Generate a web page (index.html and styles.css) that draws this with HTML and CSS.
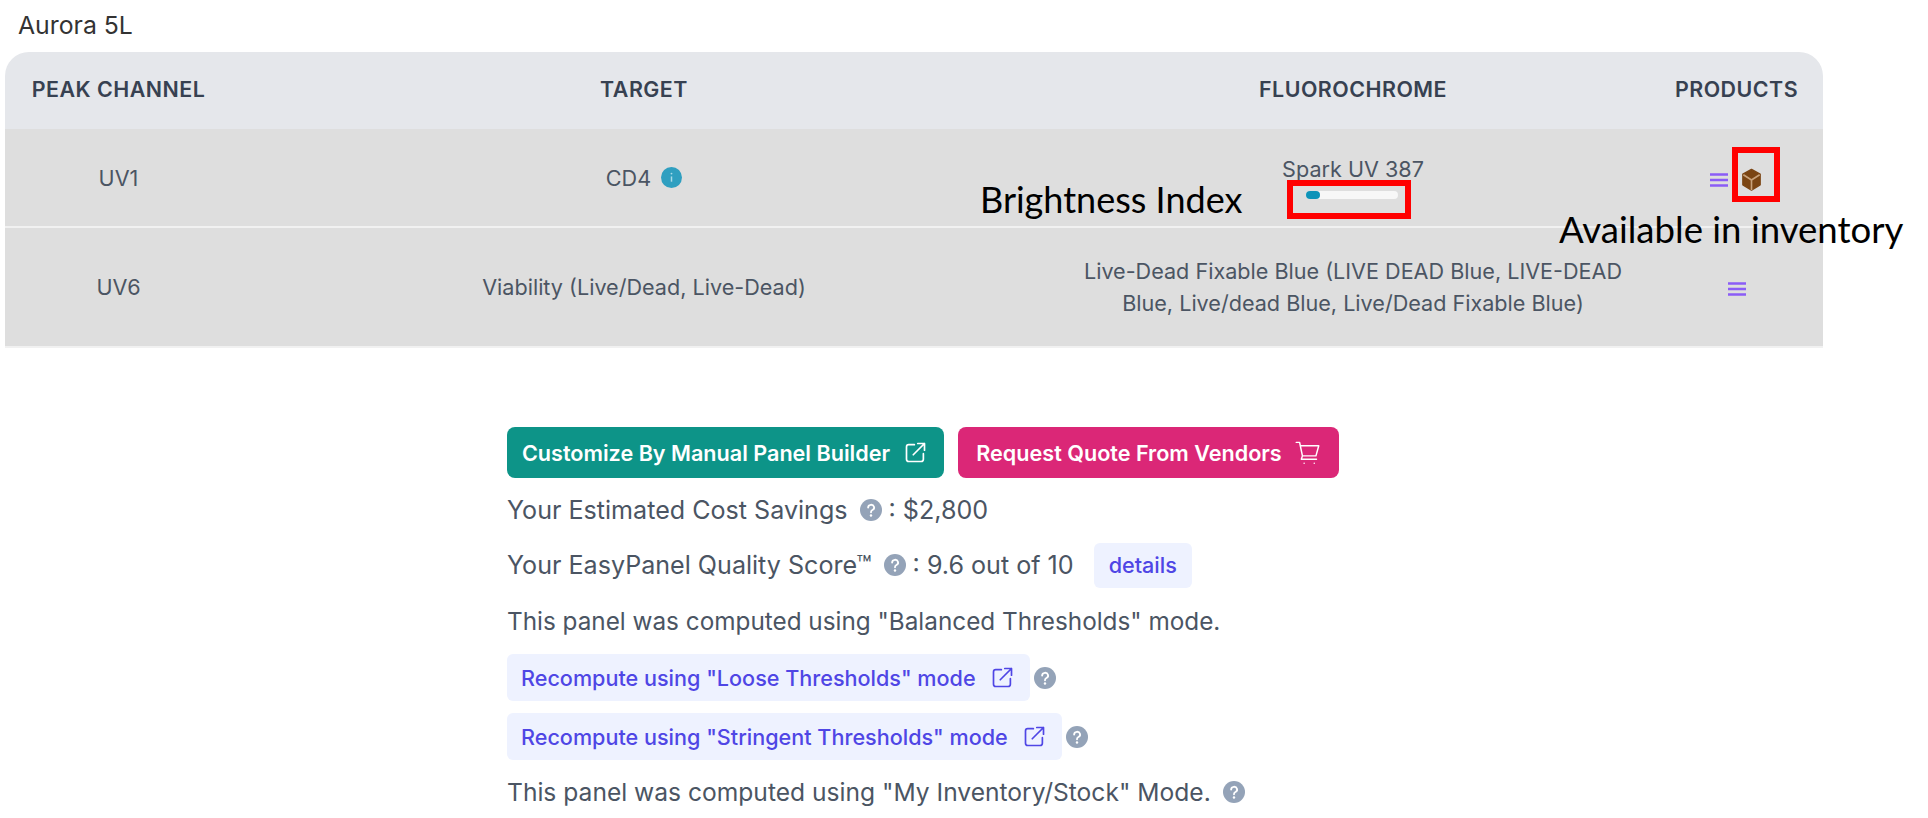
FILE: index.html
```html
<!DOCTYPE html>
<html lang="en">
<head>
    <meta charset="UTF-8">
    <meta name="viewport" content="width=device-width, initial-scale=1.0">
    <title>Aurora 5L</title>
    <link rel="stylesheet" href="styles.css">
</head>
<body>
    <svg class="icon-defs" width="0" height="0">
        <symbol id="i-bars" viewBox="0 0 18 14">
            <path d="M0 1.5h18M0 7h18M0 12.5h18" fill="none" stroke="currentColor" stroke-width="2.4"/>
        </symbol>
        <symbol id="i-external" viewBox="0 0 24 24">
            <path d="M11 5H6a2 2 0 0 0-2 2v11a2 2 0 0 0 2 2h11a2 2 0 0 0 2-2v-5M10 14 20 4M14 4h6v6" fill="none" stroke="currentColor" stroke-width="1.5" stroke-linecap="round" stroke-linejoin="round"/>
        </symbol>
        <symbol id="i-help" viewBox="0 0 20 20">
            <circle cx="10" cy="10" r="10" fill="currentColor"/>
            <path d="M7.4 7.7a2.7 2.5 0 1 1 3.9 2.3c-.9.5-1.300 1-1.300 2" fill="none" stroke="#fff" stroke-width="1.7" stroke-linecap="round"/>
            <circle cx="10" cy="15" r="1.1" fill="#fff"/>
        </symbol>
    </svg>

    <div class="title">Aurora 5L</div>

    <table class="panel-table">
        <thead>
            <tr>
                <th class="col-peak">PEAK CHANNEL</th>
                <th class="col-target">TARGET</th>
                <th class="col-fluor">FLUOROCHROME</th>
                <th class="col-products">PRODUCTS</th>
            </tr>
        </thead>
        <tbody>
            <tr class="row-one">
                <td>UV1</td>
                <td>
                    <span class="target-cell">CD4
                        <svg class="info-icon" viewBox="0 0 20 20"><circle cx="10" cy="10" r="10" fill="#2f9fc0"/><path d="M10 9v5" stroke="#a9dbe8" stroke-width="1.4"/><circle cx="10" cy="6.300" r=".9" fill="#a9dbe8"/></svg>
                    </span>
                </td>
                <td>
                    <div class="fluor-name">Spark UV 387</div>
                    <div class="bright-bar"><div class="bright-fill"></div></div>
                </td>
                <td>
                    <span class="product-icons">
                        <svg class="bars-icon"><use href="#i-bars"/></svg>
                        <svg class="box-icon" viewBox="0 0 24 24">
                            <path d="M12 1.500 21 6.500v11L12 23 3 17.500v-11z" fill="#7b4513" stroke="#7b4513" stroke-width="1.500" stroke-linejoin="round"/>
                            <path d="M3.500 7 12 12.500 20.500 7M12 12.500V23" fill="none" stroke="#c9a27a" stroke-width="1.700"/>
                        </svg>
                    </span>
                </td>
            </tr>
            <tr class="row-two">
                <td>UV6</td>
                <td>Viability (Live/Dead, Live-Dead)</td>
                <td>Live-Dead Fixable Blue (LIVE DEAD Blue, LIVE-DEAD Blue, Live/dead Blue, Live/Dead Fixable Blue)</td>
                <td><svg class="bars-icon"><use href="#i-bars"/></svg></td>
            </tr>
        </tbody>
    </table>

    <div class="summary">
        <div class="actions">
            <a class="btn btn-teal">Customize By Manual Panel Builder <svg class="btn-icon"><use href="#i-external"/></svg></a>
            <a class="btn btn-pink">Request Quote From Vendors
                <svg class="btn-icon" viewBox="0 0 24 24"><path d="M2 3h3l.6 3M5.600 6H22l-2.500 9H7.500zM7.500 15 6.500 18H20M9 21.500h.01M18 21.500h.01" fill="none" stroke="currentColor" stroke-width="1.3" stroke-linecap="round" stroke-linejoin="round"/></svg>
            </a>
        </div>
        <div class="line line-savings">Your Estimated Cost Savings <svg class="help-icon"><use href="#i-help"/></svg> : $2,800</div>
        <div class="line line-score">Your EasyPanel Quality Score™ <svg class="help-icon"><use href="#i-help"/></svg> : 9.6 out of 10 <a class="chip chip-details">details</a></div>
        <div class="line line-mode">This panel was computed using "Balanced Thresholds" mode.</div>
        <div class="line-chip chip-first">
            <a class="chip chip-wide">Recompute using "Loose Thresholds" mode <svg class="chip-icon"><use href="#i-external"/></svg></a>
            <svg class="help-icon"><use href="#i-help"/></svg>
        </div>
        <div class="line-chip chip-second">
            <a class="chip chip-wide">Recompute using "Stringent Thresholds" mode <svg class="chip-icon"><use href="#i-external"/></svg></a>
            <svg class="help-icon"><use href="#i-help"/></svg>
        </div>
        <div class="line line-stock">This panel was computed using "My Inventory/Stock" Mode. <svg class="help-icon"><use href="#i-help"/></svg></div>
    </div>

    <!-- annotations pasted over the screenshot -->
    <div class="note note-brightness">Brightness Index</div>
    <div class="note note-inventory">Available in inventory</div>
    <div class="red-box red-bar"></div>
    <div class="red-box red-product"></div>
</body>
</html>
```

FILE: styles.css
```css
body {
    font-family: Inter, "Open Sans", sans-serif;
    background-color: #ffffff;
    color: #4b5563;
    margin: 0;
    padding: 0;
    height: 818px;
    overflow: hidden;
    position: relative;
}
.icon-defs {
    position: absolute;
}
.title {
    font-size: 24.800px;
    line-height: 24px;
    color: #333333;
    padding: 13px 0 15px 18px;
}
.panel-table {
    width: 1818px;
    margin-left: 5px;
    border-collapse: separate;
    border-spacing: 0;
    table-layout: fixed;
    font-size: 21.600px;
}
.col-peak {
    width: 227px;
}
.col-target {
    width: 824px;
}
.col-fluor {
    width: 594px;
}
.col-products {
    width: 173px;
}
.panel-table th {
    height: 73px;
    padding: 0 0 4px;
    background-color: #e5e7eb;
    color: #374151;
    font-weight: 600;
    font-size: 21.400px;
    letter-spacing: 0.5px;
    text-align: center;
}
.panel-table th:first-child {
    border-top-left-radius: 24px;
}
.panel-table th:last-child {
    border-top-right-radius: 24px;
}
.panel-table td {
    background-color: #dedede;
    padding: 0 26px;
    text-align: center;
    line-height: 32px;
}
.row-one td {
    height: 97px;
    border-bottom: 2px solid #f1f1f1;
}
.row-two td {
    height: 118px;
    border-bottom: 2px solid #f1f1f1;
}
.target-cell {
    display: inline-flex;
    align-items: center;
    gap: 10px;
}
.info-icon {
    width: 21px;
    height: 21px;
}
.fluor-name {
    line-height: 24px;
    margin-top: 0;
}
.bright-bar {
    width: 92px;
    height: 8px;
    margin: 10px auto 0;
    background-color: #f7f7f7;
    border-radius: 4px;
    position: relative;
    left: -1px;
}
.bright-fill {
    width: 14px;
    height: 8px;
    background-color: #0e93b8;
    border-radius: 4px;
}
.product-icons {
    display: inline-flex;
    align-items: center;
    gap: 12px;
    vertical-align: middle;
}
.bars-icon {
    width: 18px;
    height: 14px;
    color: #8b5cf6;
    vertical-align: middle;
}
.box-icon {
    width: 23px;
    height: 23px;
}
.summary {
    padding: 79px 0 0 507px;
}
.actions {
    display: flex;
    gap: 14px;
}
.btn {
    display: flex;
    align-items: center;
    justify-content: center;
    gap: 12px;
    height: 51px;
    border-radius: 8px;
    color: #ffffff;
    font-weight: 600;
    font-size: 21.600px;
}
.btn-teal {
    width: 437px;
    background-color: #0d9488;
}
.btn-pink {
    width: 381px;
    background-color: #db2777;
}
.btn-icon {
    width: 27px;
    height: 27px;
}
.line {
    display: flex;
    align-items: center;
    gap: 7px;
    font-size: 24.300px;
    color: #4b5563;
}
.line-savings {
    height: 32px;
    margin-top: 16px;
    font-size: 25.100px;
}
.line-score {
    height: 46px;
    margin-top: 16px;
    font-size: 25.100px;
}
.line-mode {
    height: 32px;
    margin-top: 17px;
}
.line-stock {
    height: 32px;
    margin-top: 16px;
    font-size: 24.600px;
}
.line svg:first-of-type {
    margin-left: 5px;
}
.help-icon {
    width: 22px;
    height: 22px;
    color: #94a3b8;
}
.chip {
    display: inline-flex;
    align-items: center;
    gap: 13px;
    background-color: #eef2ff;
    color: #4f46e5;
    border-radius: 6px;
    font-weight: 500;
    font-size: 21.600px;
}
.chip-details {
    height: 45px;
    padding: 0 15px;
    margin-left: 13px;
}
.chip-wide {
    height: 47px;
    padding: 0 14px;
}
.chip-icon {
    width: 27px;
    height: 27px;
}
.line-chip {
    display: flex;
    align-items: center;
    gap: 4px;
    height: 47px;
}
.chip-first {
    margin-top: 17px;
}
.chip-second {
    margin-top: 12px;
}
.note {
    position: absolute;
    font-family: Lato, "Open Sans", sans-serif;
    font-size: 36px;
    line-height: 44px;
    color: #000000;
    white-space: nowrap;
}
.note-brightness {
    left: 980px;
    top: 177px;
}
.note-inventory {
    left: 1559px;
    top: 207px;
    font-size: 36.600px;
}
.red-box {
    position: absolute;
    box-sizing: border-box;
    border: 6px solid #ff0000;
}
.red-bar {
    left: 1287px;
    top: 180px;
    width: 124px;
    height: 39px;
}
.red-product {
    left: 1732px;
    top: 147px;
    width: 48px;
    height: 55px;
}
```
